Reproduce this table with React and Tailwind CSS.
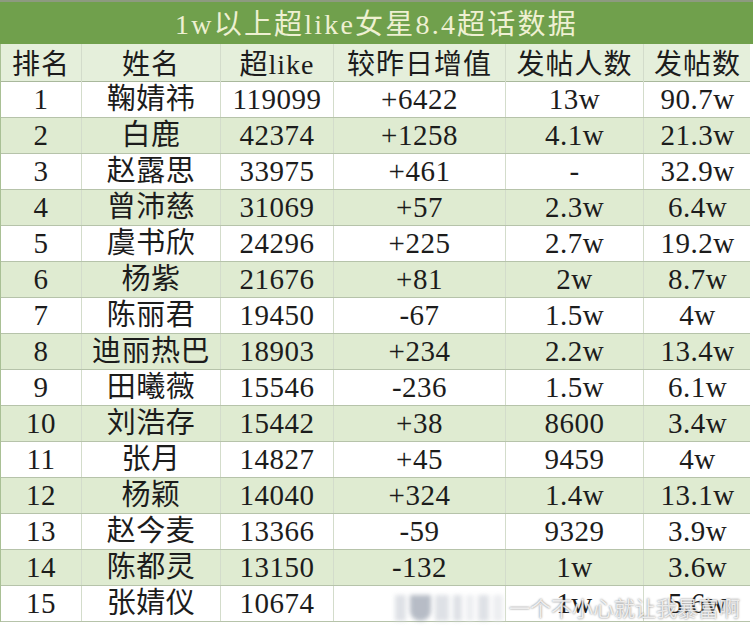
import React from "react";

const rows = [
  ["1", "鞠婧祎", "119099", "+6422", "13w", "90.7w"],
  ["2", "白鹿", "42374", "+1258", "4.1w", "21.3w"],
  ["3", "赵露思", "33975", "+461", "-", "32.9w"],
  ["4", "曾沛慈", "31069", "+57", "2.3w", "6.4w"],
  ["5", "虞书欣", "24296", "+225", "2.7w", "19.2w"],
  ["6", "杨紫", "21676", "+81", "2w", "8.7w"],
  ["7", "陈丽君", "19450", "-67", "1.5w", "4w"],
  ["8", "迪丽热巴", "18903", "+234", "2.2w", "13.4w"],
  ["9", "田曦薇", "15546", "-236", "1.5w", "6.1w"],
  ["10", "刘浩存", "15442", "+38", "8600", "3.4w"],
  ["11", "张月", "14827", "+45", "9459", "4w"],
  ["12", "杨颖", "14040", "+324", "1.4w", "13.1w"],
  ["13", "赵今麦", "13366", "-59", "9329", "3.9w"],
  ["14", "陈都灵", "13150", "-132", "1w", "3.6w"],
  ["15", "张婧仪", "10674", "", "1w", "5.6w"],
];

const headers = ["排名", "姓名", "超like", "较昨日增值", "发帖人数", "发帖数"];
const cols = "grid grid-cols-[81px_139px_113px_172px_138px_107px]";

function Cell({ children, last }) {
  return (
    <div
      className={
        "flex items-center justify-center whitespace-nowrap " +
        (last ? "" : "border-r border-[#d3dccb]")
      }
    >
      {children}
    </div>
  );
}

export default function App() {
  return (
    <div
      className="relative w-[753px] h-[627px] bg-white overflow-hidden text-[#1c1c1c]"
      style={{ fontFamily: '"Liberation Serif", "Noto Sans CJK SC", serif' }}
    >
      <div className="h-[2px] bg-[#8d9a80]" />
      <div className="h-[42px] bg-[#70a04c] flex items-center justify-center text-[28px] text-[#eef0d2] tracking-[2.2px] pt-[4px]">
        1w以上超like女星8.4超话数据
      </div>
      <div className="w-[750px] border-l border-[#a9c095]">
        <div className={cols + " h-[38px] bg-[#e5efdb] border-b border-[#a9b89c] text-[28px] tracking-[1px]"}>
          {headers.map((h, i) => (
            <Cell key={i} last={i === 5}>
              {h}
            </Cell>
          ))}
        </div>
        {rows.map((r, ri) => (
          <div
            key={ri}
            className={
              cols +
              " h-[36px] border-b border-[#b6c3aa] text-[29px] tracking-[0.5px] " +
              (ri % 2 === 1 ? "bg-[#dfebd1]" : "bg-white")
            }
          >
            {r.map((c, ci) => (
              <Cell key={ci} last={ci === 5}>
                <span className="leading-none">{c}</span>
              </Cell>
            ))}
          </div>
        ))}
      </div>

      {/* watermark */}
      <div className="absolute left-[395px] top-[592px] flex items-center">
        <div className="flex h-[26px] w-[108px] gap-[4px] blur-[2px] opacity-70">
          <div className="w-[12px] bg-gray-300" />
          <div className="w-[22px] bg-gray-400 rounded-b-full" />
          <div className="w-[14px] bg-gray-300" />
          <div className="w-[10px] bg-gray-300" />
          <div className="w-[8px] bg-gray-200" />
          <div className="w-[12px] bg-gray-300" />
          <div className="w-[10px] bg-gray-200" />
        </div>
        <div
          className="ml-[6px] text-[21px] text-white/80"
          style={{
            fontFamily: '"Noto Sans CJK SC", sans-serif',
            textShadow: "0 0 2px rgba(90,90,90,0.9)",
          }}
        >
          一个不小心就让我暴富啊
        </div>
      </div>
    </div>
  );
}
